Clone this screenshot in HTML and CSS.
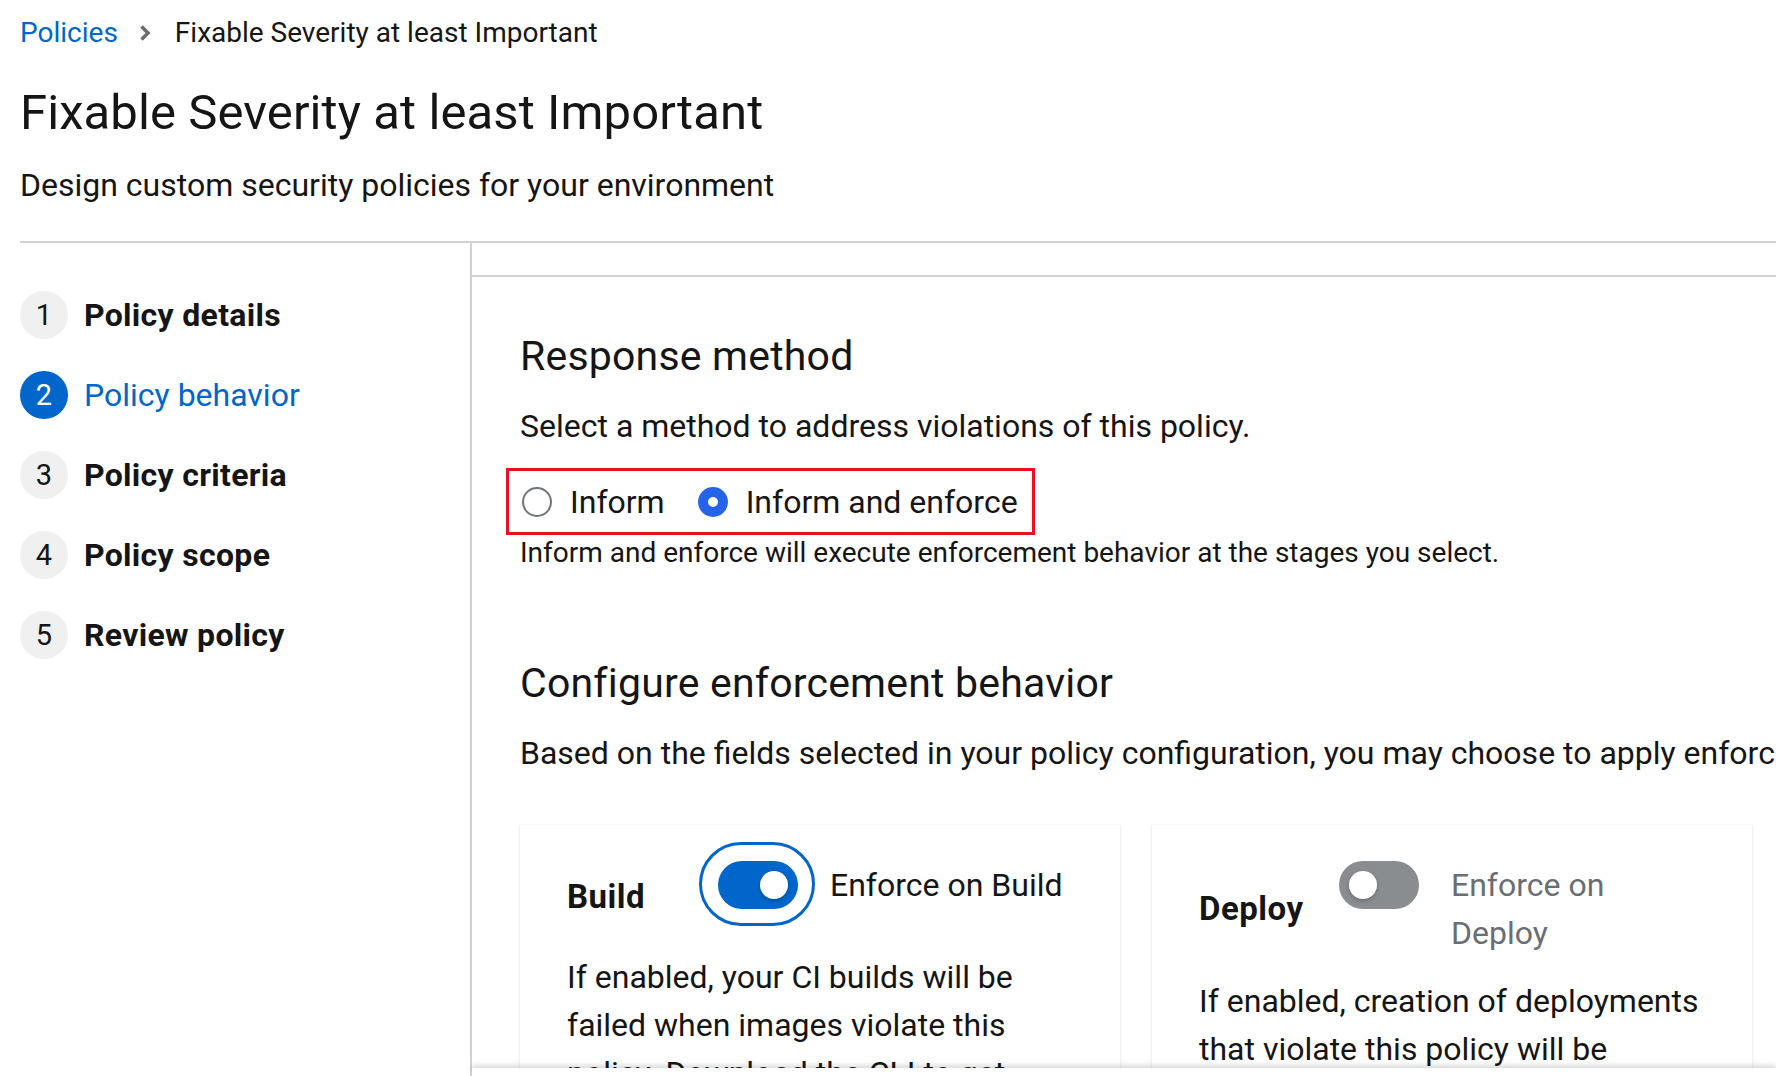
FILE: index.html
```html
<!DOCTYPE html>
<html lang="en">
<head>
<meta charset="utf-8">
<title>Fixable Severity at least Important</title>
<link rel="stylesheet" href="styles.css">
</head>
<body>
<div class="page">
  <header class="page-header">
    <nav class="breadcrumb">
      <a class="crumb-link">Policies</a>
      <svg class="crumb-sep" viewBox="0 0 12 18" aria-hidden="true"><path d="M2.5 2.5l6.5 6.5-6.5 6.5" fill="none" stroke="#6a6e73" stroke-width="3.6"/></svg>
      <span class="crumb-current">Fixable Severity at least Important</span>
    </nav>
    <h1 class="page-title">Fixable Severity at least Important</h1>
    <p class="page-subtitle">Design custom security policies for your environment</p>
  </header>

  <div class="wizard">
    <ol class="wizard-nav">
      <li class="step"><span class="step-num">1</span><span class="step-label">Policy details</span></li>
      <li class="step current"><span class="step-num">2</span><span class="step-label">Policy behavior</span></li>
      <li class="step"><span class="step-num">3</span><span class="step-label">Policy criteria</span></li>
      <li class="step"><span class="step-num">4</span><span class="step-label">Policy scope</span></li>
      <li class="step"><span class="step-num">5</span><span class="step-label">Review policy</span></li>
    </ol>

    <section class="wizard-main">
      <div class="wizard-strip"></div>
      <div class="wizard-body">
        <h2 class="section-title">Response method</h2>
        <p class="lead">Select a method to address violations of this policy.</p>
        <div class="radio-group">
          <label class="radio"><span class="radio-dot"></span>Inform</label>
          <label class="radio checked"><span class="radio-dot"></span>Inform and enforce</label>
        </div>
        <p class="helper">Inform and enforce will execute enforcement behavior at the stages you select.</p>

        <h2 class="section-title section-title--spaced">Configure enforcement behavior</h2>
        <p class="lead nowrap">Based on the fields selected in your policy configuration, you may choose to apply enforcement at the following stages.</p>

        <div class="cards">
          <article class="card">
            <div class="card-head card-head--focus">
              <h3 class="card-title card-title--wide">Build</h3>
              <div class="switch">
                <span class="switch-toggle on focus"><span class="knob"></span></span>
                <span class="switch-label">Enforce on Build</span>
              </div>
            </div>
            <p class="card-text">If enabled, your CI builds will be failed when images violate this policy. Download the CLI to get started.</p>
          </article>
          <article class="card">
            <div class="card-head">
              <h3 class="card-title">Deploy</h3>
              <div class="switch">
                <span class="switch-toggle"><span class="knob"></span></span>
                <span class="switch-label off">Enforce on Deploy</span>
              </div>
            </div>
            <p class="card-text">If enabled, creation of deployments that violate this policy will be blocked. In clusters with the admission controller enabled, the Kubernetes API server will block noncompliant deployments.</p>
          </article>
        </div>
      </div>
      <div class="wizard-footer"></div>
    </section>
  </div>
</div>
</body>
</html>
```

FILE: styles.css
```css
html, body {
  margin: 0;
  height: 100%;
}

body {
  font-family: Roboto, "Liberation Sans", sans-serif;
  color: #151515;
  background: #fff;
  overflow: hidden;
}

.page {
  height: 1076px;
  display: flex;
  flex-direction: column;
  padding-left: 20px;
}

/* ---------- header ---------- */
.page-header {
  flex: none;
  padding: 12px 0 32px;
  border-bottom: 2px solid #d2d2d2;
}

.breadcrumb {
  display: flex;
  align-items: center;
  font-size: 28px;
  line-height: 42px;
}

.crumb-link {
  color: #0066cc;
}

.crumb-sep {
  width: 12px;
  height: 18px;
  margin: 0 24px 0 21px;
}

.page-title {
  margin: 28px 0 0;
  font-size: 49px;
  line-height: 62px;
  font-weight: 400;
  letter-spacing: 0.1px;
}

.page-subtitle {
  margin: 17px 0 0;
  font-size: 32px;
  line-height: 48px;
}

/* ---------- wizard ---------- */
.wizard {
  flex: 1;
  display: flex;
  min-height: 0;
}

.wizard-nav {
  flex: none;
  width: 450px;
  margin: 0;
  padding: 48px 0 0;
  list-style: none;
  border-right: 2px solid #d2d2d2;
  display: flex;
  flex-direction: column;
  gap: 32px;
}

.step {
  display: flex;
  align-items: center;
  gap: 16px;
  height: 48px;
}

.step-num {
  flex: none;
  width: 48px;
  height: 48px;
  border-radius: 50%;
  background: #f0f0f0;
  display: flex;
  align-items: center;
  justify-content: center;
  font-size: 29px;
}

.step-label {
  font-size: 32px;
  line-height: 48px;
  font-weight: 700;
  letter-spacing: 0.3px;
}

.step.current .step-num {
  background: #0066cc;
  color: #fff;
}

.step.current .step-label {
  color: #0066cc;
  font-weight: 400;
  letter-spacing: 0;
}

.wizard-main {
  flex: 1;
  min-width: 0;
  display: flex;
  flex-direction: column;
}

.wizard-strip {
  flex: none;
  height: 32px;
  border-bottom: 2px solid #d2d2d2;
}

.wizard-body {
  flex: 1;
  min-height: 0;
  overflow: hidden;
  padding: 53px 0 0 48px;
}

.section-title {
  margin: 0;
  font-size: 41px;
  line-height: 52px;
  font-weight: 400;
  letter-spacing: 0.2px;
}

.section-title--spaced {
  margin-top: 86px;
}

.lead {
  margin: 20px 0 0;
  font-size: 32px;
  line-height: 48px;
}

.nowrap {
  white-space: nowrap;
}

/* ---------- radios ---------- */
.radio-group {
  display: flex;
  width: max-content;
  gap: 33px;
  margin: 18px 0 0 -14px;
  padding: 7px 14px 6px 13px;
  border: 3px solid #e8121f;
}

.radio {
  display: flex;
  align-items: center;
  gap: 18px;
  font-size: 32px;
  line-height: 48px;
}

.radio-dot {
  flex: none;
  box-sizing: border-box;
  width: 30px;
  height: 30px;
  border-radius: 50%;
  border: 2px solid #6f7479;
  background: #fff;
}

.radio.checked .radio-dot {
  border: 10px solid #2563eb;
}

.helper {
  margin: 0;
  font-size: 28px;
  line-height: 36px;
}

/* ---------- cards ---------- */
.cards {
  display: grid;
  grid-template-columns: 600px 600px;
  gap: 32px;
  margin-top: 48px;
}

.card {
  background: #fff;
  padding: 36px 47px 0;
  box-shadow: 0 1px 2px rgba(3, 3, 3, 0.12), 0 0 2px rgba(3, 3, 3, 0.06);
}

.card-head {
  display: flex;
  align-items: center;
  gap: 34px;
}

.card-head--focus {
  min-height: 72px;
}

.card-title {
  flex: none;
  margin: 0;
  min-width: 106px;
  font-size: 33px;
  line-height: 48px;
  font-weight: 700;
  letter-spacing: 0.5px;
}

.card-title--wide {
  min-width: 117px;
}

.switch {
  align-self: flex-start;
  display: flex;
  gap: 32px;
  min-width: 0;
}

.switch-toggle {
  position: relative;
  flex: none;
  width: 80px;
  height: 48px;
  border-radius: 24px;
  background: #8a8d90;
}

.knob {
  position: absolute;
  top: 10px;
  left: 10px;
  width: 28px;
  height: 28px;
  border-radius: 50%;
  background: #fff;
  box-shadow: 0 2px 4px rgba(0, 0, 0, 0.22);
}

.switch-toggle.on {
  background: #0066cc;
}

.switch-toggle.on .knob {
  left: 42px;
}

.switch-toggle.focus::after {
  content: "";
  position: absolute;
  top: -19px;
  left: -19px;
  right: -17px;
  bottom: -17px;
  border: 3px solid #0066cc;
  border-radius: 44px;
}

.switch-label {
  font-size: 32px;
  line-height: 48px;
}

.switch-label.off {
  color: #6a6e73;
}

.card-text {
  margin: 20px 0 0;
  font-size: 32px;
  line-height: 48px;
}

.wizard-footer {
  position: relative;
  flex: none;
  height: 8px;
  background: #fff;
  box-shadow: 0 -3px 5px rgba(3, 3, 3, 0.14);
}
```
